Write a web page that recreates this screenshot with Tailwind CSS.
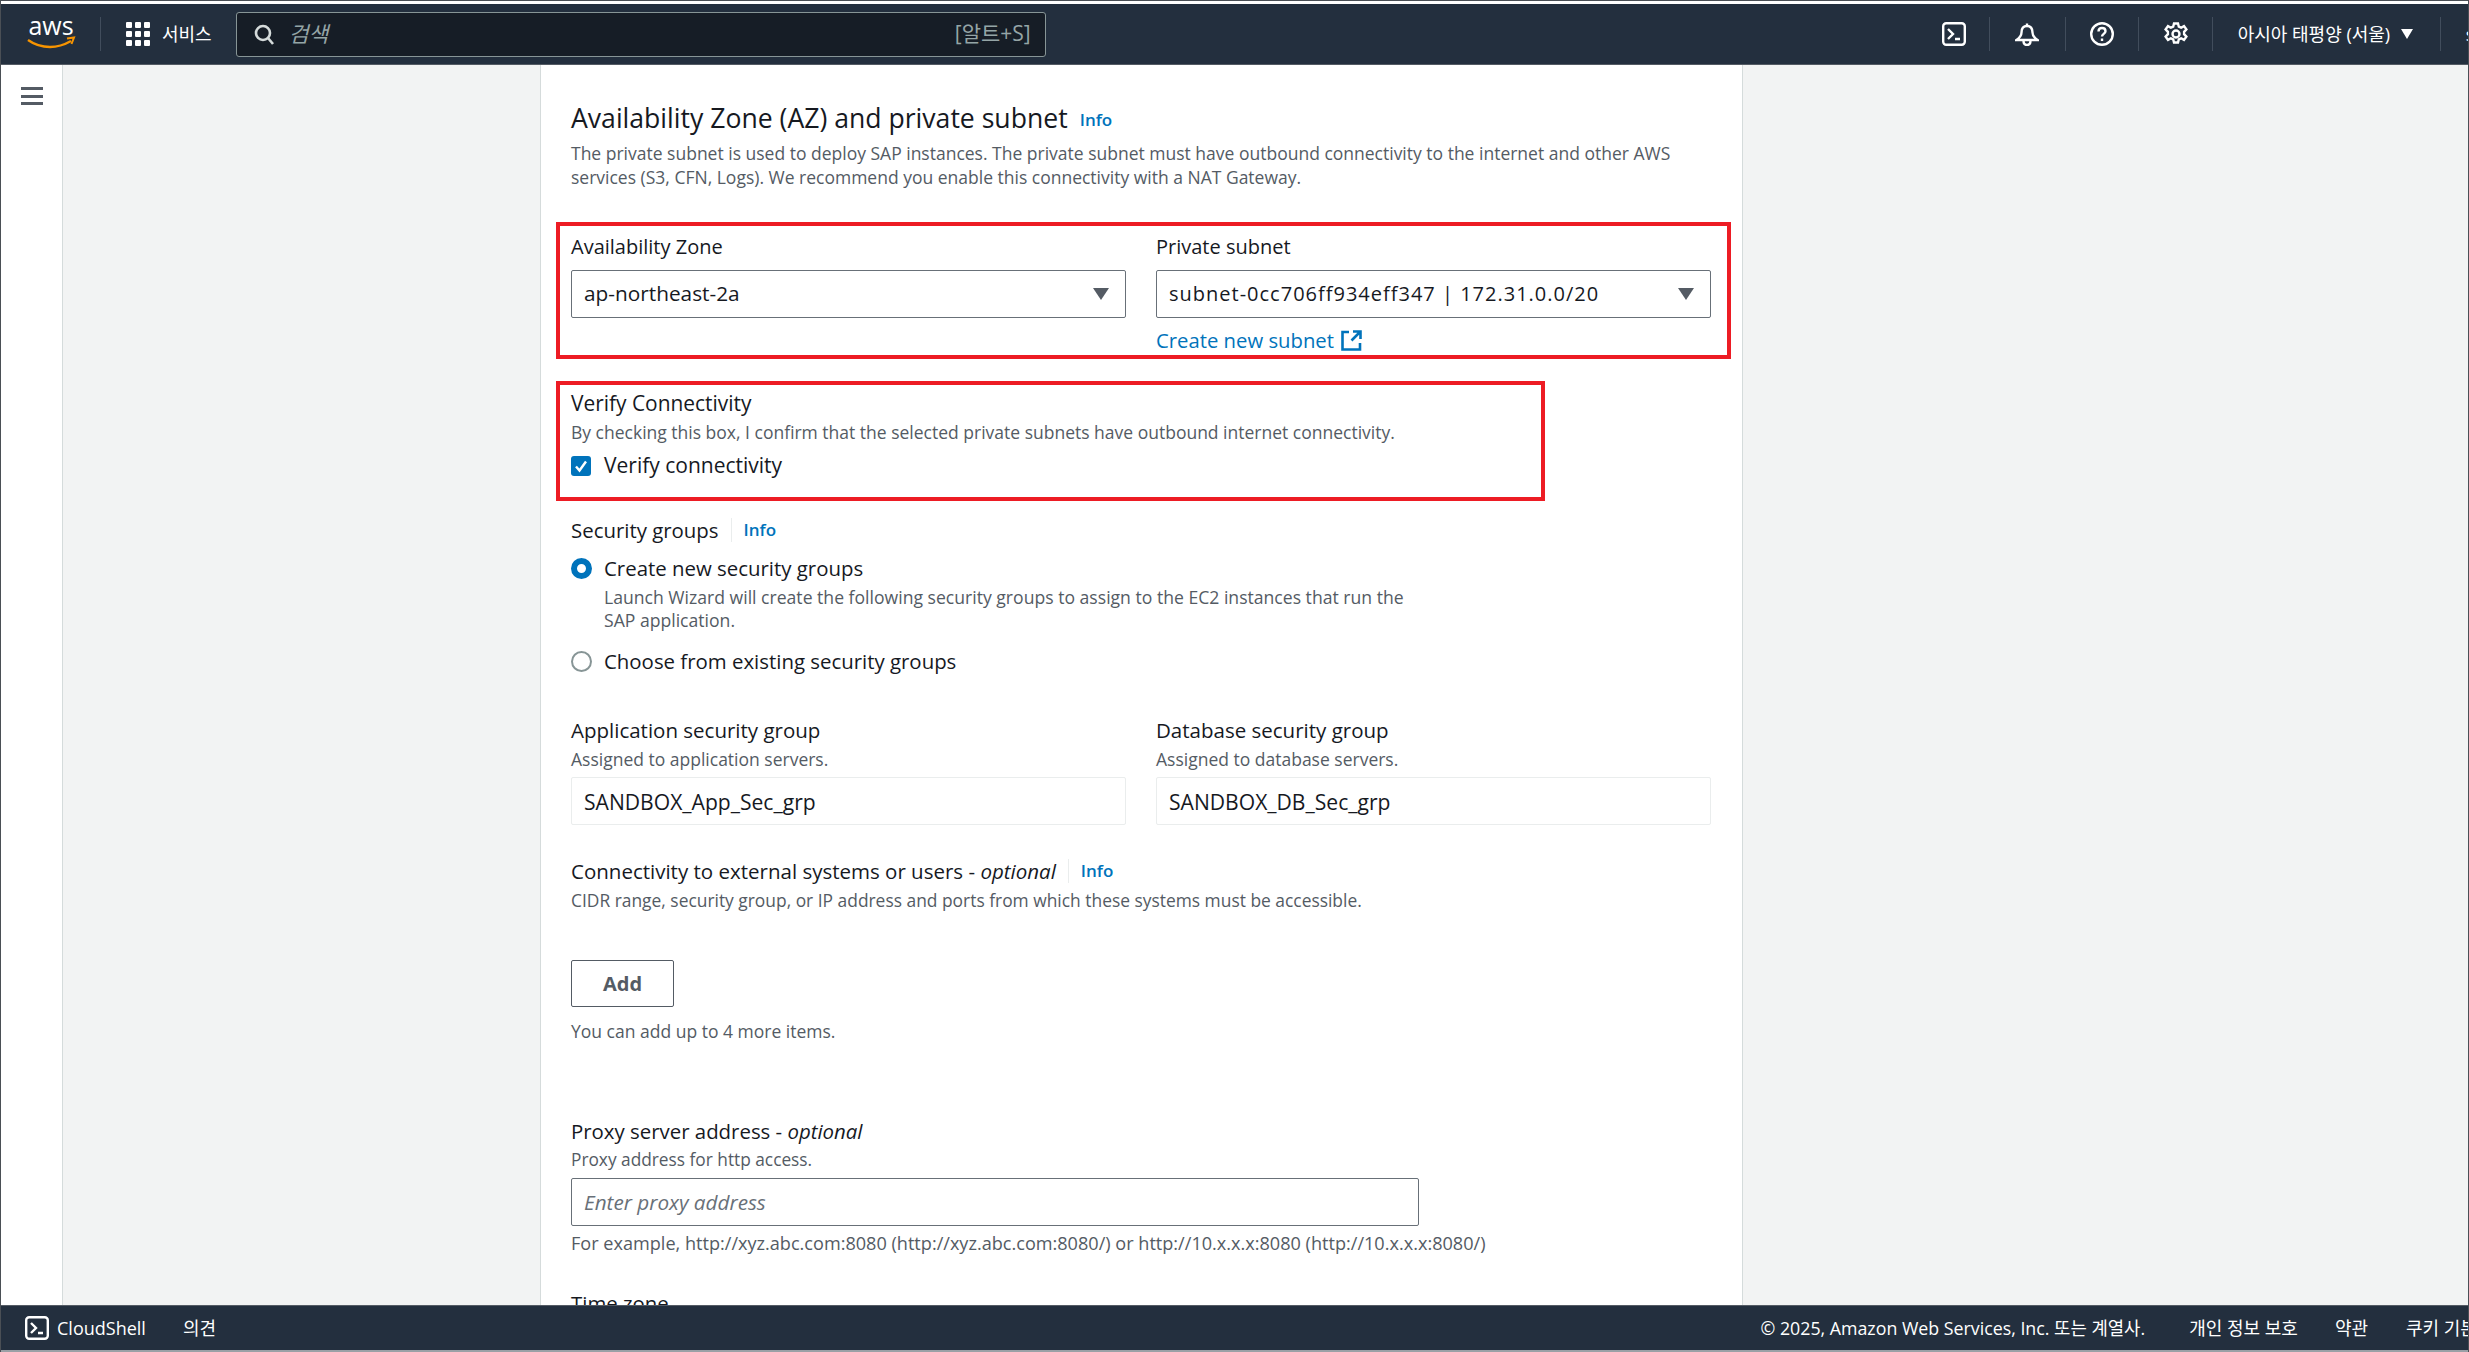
<!DOCTYPE html>
<html lang="en">
<head>
    <meta charset="UTF-8">
    <title>Launch Wizard</title>
    <script src="https://cdn.jsdelivr.net/npm/@tailwindcss/browser@4"></script>
</head>
<body class="overflow-hidden">
<div class="h-[1352px] w-[2469px] flex flex-col overflow-hidden bg-white border-x border-t border-[#4a4f55] pt-[3px] font-['Open_Sans','Noto_Sans_CJK_KR',sans-serif] text-[#16191f] text-[20.4px]">

    <!-- Top nav -->
    <header class="h-[61px] shrink-0 bg-[#232f3e] border-b border-[#545b64] flex items-center text-white whitespace-nowrap overflow-hidden">
        <svg class="ml-[26px] w-[48px] h-[29px] overflow-visible shrink-0" viewBox="0 0 48 29">
            <text x="24" y="15" text-anchor="middle" font-family="Open Sans" font-size="25" fill="#fff">aws</text>
            <path d="M1 20c7 5 15 7 22 7 7 0 14-2 21-6" fill="none" stroke="#f79400" stroke-width="2.4"/>
            <path d="M40 18.5l7-1-2.5 6.5" fill="none" stroke="#f79400" stroke-width="2"/>
        </svg>
        <div class="ml-[25px] w-px h-[34px] bg-[#414d5c] shrink-0"></div>
        <svg class="ml-[25px] w-[24px] h-[24px] shrink-0" viewBox="0 0 24 24" fill="#fff">
            <rect x="0" y="0" width="6" height="6" rx="1"/><rect x="9" y="0" width="6" height="6" rx="1"/><rect x="18" y="0" width="6" height="6" rx="1"/>
            <rect x="0" y="9" width="6" height="6" rx="1"/><rect x="9" y="9" width="6" height="6" rx="1"/><rect x="18" y="9" width="6" height="6" rx="1"/>
            <rect x="0" y="18" width="6" height="6" rx="1"/><rect x="9" y="18" width="6" height="6" rx="1"/><rect x="18" y="18" width="6" height="6" rx="1"/>
        </svg>
        <span class="ml-[12px] text-[18px] shrink-0">서비스</span>
        <div class="ml-[24px] w-[810px] h-[45px] shrink-0 bg-[#161d26] border border-[#879596] rounded-[3px] flex items-center pl-[17px] pr-[14px]">
            <svg class="w-[21px] h-[21px]" viewBox="0 0 21 21" fill="none" stroke="#d5dbdb" stroke-width="2.6"><circle cx="9" cy="9" r="7"/><path d="M14 14l5 6"/></svg>
            <span class="ml-[14px] italic text-[#95a5a6] text-[21.5px]">검색</span>
            <span class="ml-auto text-[#95a5a6] text-[21px]">[알트+S]</span>
        </div>

        <svg class="ml-[896px] w-[24px] h-[24px] shrink-0" viewBox="0 0 24 24" fill="none" stroke="#fff" stroke-width="2.4"><rect x="1.2" y="1.2" width="21.6" height="21.6" rx="3"/><path d="M6 7l5 5-5 5M13 17h5"/></svg>
        <div class="ml-[23px] w-px h-[34px] bg-[#414d5c] shrink-0"></div>
        <svg class="ml-[25px] w-[24px] h-[24px] shrink-0" viewBox="0 0 24 24" fill="none" stroke="#fff" stroke-width="2.4"><path d="M12 1.500v2.500M12 4c-4 0-5.500 3-5.500 6.500 0 3-1.500 5-5 7.500h21c-3.500-2.500-5-4.500-5-7.500C17.500 7 16 4 12 4zM8.500 18.500c0 3 1.500 4.500 3.500 4.500s3.500-1.500 3.500-4.500"/></svg>
        <div class="ml-[26px] w-px h-[34px] bg-[#414d5c] shrink-0"></div>
        <svg class="ml-[24px] w-[24px] h-[24px] shrink-0" viewBox="0 0 24 24" fill="none" stroke="#fff" stroke-width="2.4"><circle cx="12" cy="12" r="10.800"/><path d="M8.500 9.500c0-2.300 1.600-3.500 3.500-3.500s3.500 1.200 3.500 3.200c0 2.600-3.500 2.800-3.500 5.300"/><path d="M12 16.500v2.500"/></svg>
        <div class="ml-[24px] w-px h-[34px] bg-[#414d5c] shrink-0"></div>
        <svg class="ml-[25px] w-[24px] h-[24px] shrink-0" viewBox="0 0 24 24" fill="none" stroke="#fff" stroke-width="2.400"><circle cx="12" cy="12" r="3.500"/><path d="M10 1.500h4l.8 3.200 2.300 1 2.900-1.600 2.400 3.300-2.300 2.400v2.400l2.300 2.400-2.400 3.300-2.900-1.600-2.300 1-.8 3.200h-4l-.8-3.200-2.300-1-2.900 1.600-2.400-3.300 2.300-2.400v-2.400L1.600 7.400 4 4.100l2.900 1.600 2.300-1z"/></svg>
        <div class="ml-[24px] w-px h-[34px] bg-[#414d5c] shrink-0"></div>
        <span class="ml-[25px] text-[18px] w-[154px] shrink-0">아시아 태평양 (서울)</span>
        <svg class="ml-[9px] w-[12px] h-[10px] shrink-0" viewBox="0 0 12 10" fill="#fff"><path d="M0 0h12L6 10z"/></svg>
        <div class="ml-[27px] w-px h-[34px] bg-[#414d5c] shrink-0"></div>
        <span class="ml-[25px] text-[18px] shrink-0">s</span>
    </header>

    <div class="flex-1 flex min-h-0">
        <!-- Side rail -->
        <aside class="w-[61px] shrink-0 bg-white border-r border-[#d5dbdb] box-content pt-[22px]">
            <div class="ml-[20px] w-[22px] flex flex-col gap-[4.5px]">
                <div class="h-[3px] bg-[#545b64]"></div>
                <div class="h-[3px] bg-[#545b64]"></div>
                <div class="h-[3px] bg-[#545b64]"></div>
            </div>
        </aside>

        <main class="flex-1 bg-[#f2f3f3] overflow-hidden">
            <div class="ml-[477px] w-[1203px] h-full bg-white border-x border-[#d5dbdb] pl-[30px] overflow-hidden">
                <div class="mt-[36px] h-[34px] flex items-center">
                    <h2 class="text-[26.6px] leading-[34px]">Availability Zone (AZ) and private subnet</h2>
                    <a class="ml-[12px] mt-[3px] text-[17px] font-semibold text-[#0073bb]">Info</a>
                </div>
                <p class="mt-[6px] w-[1120px] text-[17.5px] leading-[24px] text-[#545b64]">The private subnet is used to deploy SAP instances. The private subnet must have outbound connectivity to the internet and other AWS services (S3, CFN, Logs). We recommend you enable this connectivity with a NAT Gateway.</p>

                <!-- Annotated: subnet selection -->
                <div class="mt-[33px] -ml-[15px] w-[1175px] h-[137px] border-4 border-[#ed1c24] pl-[11px] pt-[9px]">
                    <div class="grid grid-cols-[555px_555px] gap-x-[30px]">
                        <div>
                            <label class="block h-[24px] leading-[24px] text-[20px]">Availability Zone</label>
                            <div class="mt-[11px] h-[48px] border border-[#687078] rounded-[2px] flex items-center pl-[12px] pr-[16px]">
                                <span class="text-[20.8px]">ap-northeast-2a</span>
                                <svg class="ml-auto w-[16px] h-[12px]" viewBox="0 0 16 12" fill="#545b64"><path d="M0 0h16L8 12z"/></svg>
                            </div>
                        </div>
                        <div>
                            <label class="block h-[24px] leading-[24px] text-[20px]">Private subnet</label>
                            <div class="mt-[11px] h-[48px] border border-[#687078] rounded-[2px] flex items-center pl-[12px] pr-[16px]">
                                <span class="text-[20px] tracking-[1px]">subnet-0cc706ff934eff347 | 172.31.0.0/20</span>
                                <svg class="ml-auto w-[16px] h-[12px]" viewBox="0 0 16 12" fill="#545b64"><path d="M0 0h16L8 12z"/></svg>
                            </div>
                            <a class="mt-[10px] h-[24px] flex items-center text-[#0073bb] text-[20.3px]">Create new subnet
                                <svg class="ml-[7px] w-[21px] h-[21px]" viewBox="0 0 21 21" fill="none" stroke="#0073bb" stroke-width="2.600"><path d="M8 2H1.500v17.500H19V13M12 1.500h7.500V9M19 2l-8.500 8.500"/></svg>
                            </a>
                        </div>
                    </div>
                </div>

                <!-- Annotated: connectivity check -->
                <div class="mt-[22px] -ml-[15px] w-[989px] h-[120px] border-4 border-[#ed1c24] pl-[11px] pt-[6px]">
                    <div class="h-[24px] leading-[24px] text-[20.9px]">Verify Connectivity</div>
                    <p class="mt-[5px] h-[24px] leading-[24px] text-[17.5px] text-[#545b64]">By checking this box, I confirm that the selected private subnets have outbound internet connectivity.</p>
                    <div class="mt-[10px] h-[24px] flex items-center">
                        <div class="w-[20px] h-[20px] rounded-[3px] bg-[#0073bb] flex items-center justify-center">
                            <svg class="w-[14px] h-[14px]" viewBox="0 0 14 14" fill="none" stroke="#fff" stroke-width="2.400"><path d="M2 7.500l3.500 4L12 2.500"/></svg>
                        </div>
                        <span class="ml-[13px] text-[21px]">Verify connectivity</span>
                    </div>
                </div>

                <!-- Security groups -->
                <div class="mt-[17px] h-[24px] flex items-center">
                    <span>Security groups</span>
                    <div class="ml-[12px] w-px h-[24px] bg-[#eaeded]"></div>
                    <a class="ml-[12px] text-[17px] font-semibold text-[#0073bb]">Info</a>
                </div>
                <div class="mt-[14px] h-[24px] flex items-center">
                    <div class="w-[21px] h-[21px] rounded-full border-[6px] border-[#0073bb]"></div>
                    <span class="ml-[12px]">Create new security groups</span>
                </div>
                <p class="mt-[6px] ml-[33px] w-[830px] text-[17.6px] leading-[23px] text-[#545b64]">Launch Wizard will create the following security groups to assign to the EC2 instances that run the SAP application.</p>
                <div class="mt-[17px] h-[24px] flex items-center">
                    <div class="w-[21px] h-[21px] rounded-full border-2 border-[#879596]"></div>
                    <span class="ml-[12px]">Choose from existing security groups</span>
                </div>

                <div class="mt-[45px] grid grid-cols-[555px_555px] gap-x-[30px]">
                    <div>
                        <label class="block h-[24px] leading-[24px] text-[20.5px]">Application security group</label>
                        <p class="mt-[5px] h-[24px] leading-[24px] text-[17.5px] text-[#545b64]">Assigned to application servers.</p>
                        <input class="mt-[6px] w-full h-[48px] border border-[#eaeded] rounded-[2px] px-[12px] outline-none text-[21.1px]" value="SANDBOX_App_Sec_grp" readonly>
                    </div>
                    <div>
                        <label class="block h-[24px] leading-[24px] text-[20.5px]">Database security group</label>
                        <p class="mt-[5px] h-[24px] leading-[24px] text-[17.5px] text-[#545b64]">Assigned to database servers.</p>
                        <input class="mt-[6px] w-full h-[48px] border border-[#eaeded] rounded-[2px] px-[12px] outline-none text-[21.1px]" value="SANDBOX_DB_Sec_grp" readonly>
                    </div>
                </div>

                <div class="mt-[34px] h-[24px] flex items-center">
                    <span class="text-[20.5px]">Connectivity to external systems or users - <i>optional</i></span>
                    <div class="ml-[12px] w-px h-[24px] bg-[#eaeded]"></div>
                    <a class="ml-[12px] text-[17px] font-semibold text-[#0073bb]">Info</a>
                </div>
                <p class="mt-[5px] h-[24px] leading-[24px] text-[17.4px] text-[#545b64]">CIDR range, security group, or IP address and ports from which these systems must be accessible.</p>
                <button class="mt-[48px] block w-[103px] h-[47px] border border-[#545b64] rounded-[2px] font-bold text-[20px] text-[#545b64]">Add</button>
                <p class="mt-[12px] h-[24px] leading-[24px] text-[17.5px] text-[#545b64]">You can add up to 4 more items.</p>

                <div class="mt-[76px] h-[24px] leading-[24px]">Proxy server address - <i>optional</i></div>
                <p class="mt-[5px] h-[24px] leading-[24px] text-[17.3px] text-[#545b64]">Proxy address for http access.</p>
                <input class="mt-[6px] block w-[848px] h-[48px] border border-[#687078] rounded-[2px] px-[12px] outline-none text-[20.7px] placeholder:italic placeholder:text-[#687078]" placeholder="Enter proxy address">
                <p class="mt-[5px] h-[24px] leading-[24px] text-[18.1px] text-[#545b64]">For example, http://xyz.abc.com:8080 (http://xyz.abc.com:8080/) or http://10.x.x.x:8080 (http://10.x.x.x:8080/)</p>
                <div class="mt-[36px] h-[24px] leading-[24px]">Time zone</div>
            </div>
        </main>
    </div>

    <!-- Footer -->
    <footer class="h-[47px] shrink-0 bg-[#232f3e] border-t border-[#545b64] border-b-2 border-b-[#9aa0a6] flex items-center text-white text-[18px] whitespace-nowrap">
        <svg class="ml-[24px] w-[24px] h-[24px]" viewBox="0 0 24 24" fill="none" stroke="#fff" stroke-width="2.400"><rect x="1.200" y="1.200" width="21.600" height="21.600" rx="3"/><path d="M6 7l5 5-5 5M13 17h5"/></svg>
        <span class="ml-[8px] w-[88px]">CloudShell</span>
        <span class="ml-[38px]">의견</span>
        <span class="ml-auto text-[17.8px]">© 2025, Amazon Web Services, Inc. 또는 계열사.</span>
        <span class="ml-[44px]">개인 정보 보호</span>
        <span class="ml-[37px]">약관</span>
        <span class="ml-[38px] w-[62px] overflow-hidden">쿠키 기본 설정</span>
    </footer>
</div>
</body>
</html>
